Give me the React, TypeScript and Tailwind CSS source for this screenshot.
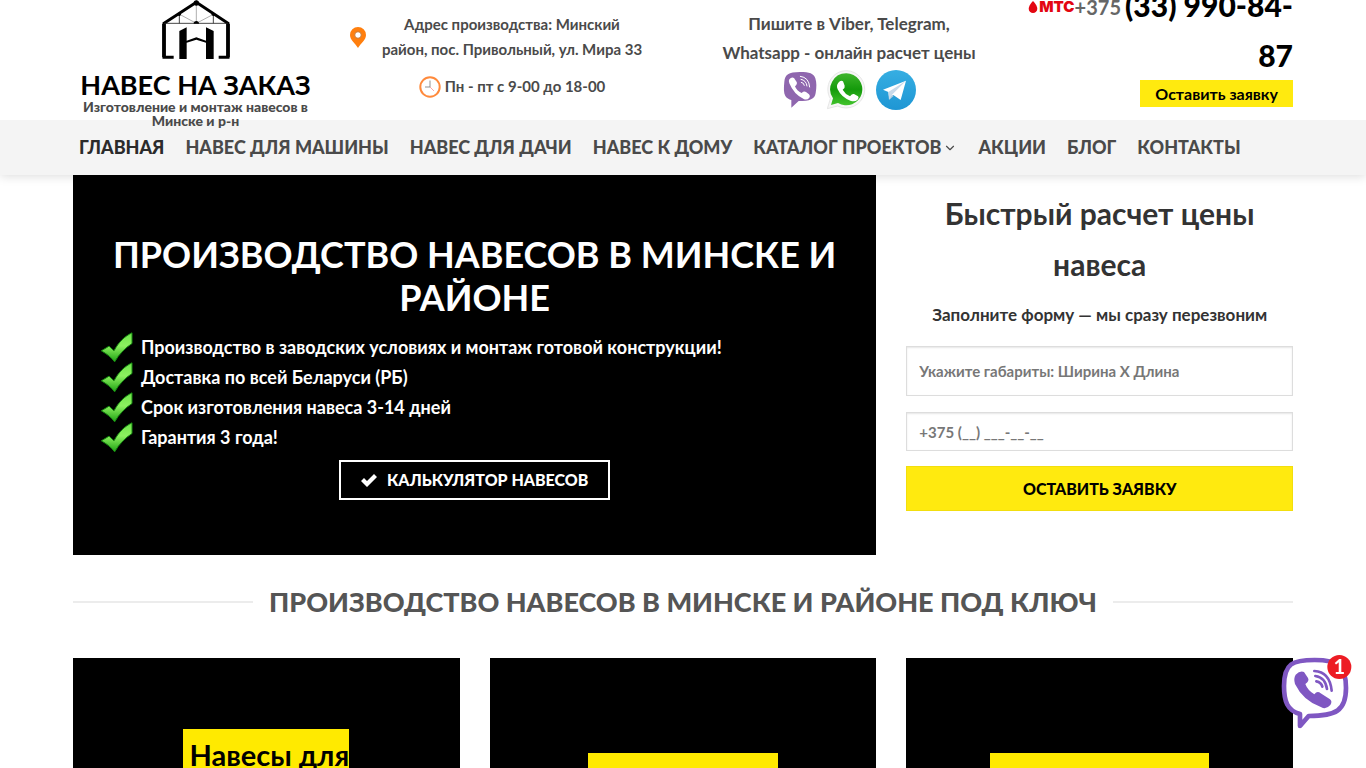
import { FC } from "react";
import { ChevronDown } from "lucide-react";

const navLinks = [
	{ label: "ГЛАВНАЯ", active: true },
	{ label: "НАВЕС ДЛЯ МАШИНЫ" },
	{ label: "НАВЕС ДЛЯ ДАЧИ" },
	{ label: "НАВЕС К ДОМУ" },
	{ label: "КАТАЛОГ ПРОЕКТОВ", menu: true },
	{ label: "АКЦИИ" },
	{ label: "БЛОГ" },
	{ label: "КОНТАКТЫ" },
];

const benefits = [
	"Производство в заводских условиях и монтаж готовой конструкции!",
	"Доставка по всей Беларуси (РБ)",
	"Срок изготовления навеса 3-14 дней",
	"Гарантия 3 года!",
];

const LogoIcon: FC = () => (
	<svg viewBox="276 0 204 180" className="h-[60px] w-[68px] shrink-0" aria-hidden="true">
		<path d="M311 172H282V70L379 7l95 63v102h-28" fill="none" stroke="#000" strokeWidth="9" />
		<path d="M282 72v100M474 72v100" stroke="#000" strokeWidth="11" />
		<path d="M282 70h192M328 42v28M430 42v28" stroke="#222" strokeWidth="2.5" />
		<path d="M379 8v62l-50-27M379 70l51-27" fill="none" stroke="#888" strokeWidth="2" />
		<circle cx="379" cy="9" r="8" />
		<circle cx="328" cy="43" r="5" />
		<circle cx="430" cy="43" r="5" />
		<path d="M371 71a8 8 0 0 1 16 0z" />
		<path d="M328 93l22-11v40l29-10 29 10V82l23 11v84h-23v-49l-29-9-29 9v49h-22z" />
	</svg>
);

const PinIcon: FC = () => (
	<svg viewBox="0 0 16 21" className="h-[21px] w-4 shrink-0" aria-hidden="true">
		<path d="M8 0a8 8 0 0 0-8 8c0 5 5 8 8 13 3-5 8-8 8-13a8 8 0 0 0-8-8z" fill="#ff7f0e" />
		<circle cx="8" cy="8" r="3.3" fill="#fff" stroke="#c9752c" />
	</svg>
);

const ClockIcon: FC = () => (
	<svg viewBox="0 0 22 22" className="h-[22px] w-[22px]" aria-hidden="true">
		<circle cx="11" cy="11" r="9.7" fill="#fff" stroke="#ff8a3c" strokeWidth="2" />
		<path d="M11 4.5V11H6" fill="none" stroke="#777" strokeWidth=".8" />
		<path d="M11 11l4 4" stroke="#f66" strokeWidth=".6" />
	</svg>
);

const ViberIcon: FC = () => (
	<svg viewBox="246 216 102 114" className="h-[38px] w-[34px]" aria-hidden="true">
		<path
			d="M297 219c-35 0-45 8-47 29-2 20-2 34 3 43 4 7 11 10 18 12v23l22-20c34 0 48-5 51-24 3-17 3-32-1-44-5-15-17-19-46-19z"
			fill="#8f66ae"
		/>
		<path
			d="M265 241q7-9 14-4l8 12q3 6-5 13 5 14 20 20 7-7 13-3l9 7q5 5 1 10-7 9-17 4-29-13-43-47-3-7 0-12z"
			fill="#fff"
		/>
		<path
			d="M298 232q26 3 28 32M300 241q16 3 18 20M301 250q8 1 9 9"
			fill="none"
			stroke="#fff"
			strokeWidth="3"
			strokeLinecap="round"
		/>
	</svg>
);

const WhatsappIcon: FC = () => (
	<svg viewBox="381 210 117 120" className="h-10 w-[39px]" aria-hidden="true">
		<defs>
			<linearGradient id="wa" x1="0" y1="0" x2="0" y2="1">
				<stop offset="0" stopColor="#3fb52c" />
				<stop offset=".5" stopColor="#149a0b" />
				<stop offset="1" stopColor="#42c42c" />
			</linearGradient>
		</defs>
		<path
			d="M439 212a56 56 0 1 1-26 106l-31 8 9-30a56 56 0 0 1 48-84z"
			fill="#f7f7f7"
			stroke="#dcdcdc"
			strokeWidth="2"
		/>
		<path d="M439 220a48 48 0 1 1-25 89l-21 6 6-20a48 48 0 0 1 40-75z" fill="url(#wa)" />
		<path
			d="M415 248q7-9 14-4l5 13q2 6-6 12 7 13 22 20 7-9 12-7l12 7q4 4-2 11-8 7-21 2-27-10-38-34-5-12 2-20z"
			fill="#fff"
		/>
	</svg>
);

const TelegramIcon: FC = () => (
	<svg viewBox="522 210 120 120" className="h-10 w-10" aria-hidden="true">
		<defs>
			<linearGradient id="tg" x1="0" y1="0" x2="0" y2="1">
				<stop offset="0" stopColor="#36aee2" />
				<stop offset="1" stopColor="#1e96d4" />
			</linearGradient>
		</defs>
		<circle cx="582" cy="270" r="60" fill="url(#tg)" />
		<path d="M543 269l69-27-16 58-22-15-12 13-3-22z" fill="#fff" />
		<path d="M559 276l53-34-42 42-9 16z" fill="#c8daea" />
		<path d="M570 284l-9 16 14-12z" fill="#a9c9dd" />
	</svg>
);

const CheckIcon: FC = () => (
	<svg viewBox="94 36 96 92" className="h-[31px] w-8 shrink-0" aria-hidden="true">
		<defs>
			<linearGradient id="check" x1="0" y1="0" x2="0" y2="1">
				<stop offset="0" stopColor="#6fe34a" />
				<stop offset=".45" stopColor="#8df060" />
				<stop offset="1" stopColor="#1ea313" />
			</linearGradient>
		</defs>
		<path
			d="M95 92l23-14 15 14c14-26 31-43 54-54v32c-20 13-39 32-52 55-11-14-24-24-40-33z"
			fill="url(#check)"
			stroke="#168a10"
			strokeWidth="3"
		/>
	</svg>
);

const ViberWidget: FC = () => (
	<a href="#viber" aria-label="Написать в Viber" className="fixed right-[14px] bottom-[38px] z-20">
		<svg viewBox="30 42 216 228" className="h-[76px] w-[72px]" aria-hidden="true">
			<path
				d="M134 60c-66 0-92 10-92 78 0 46 10 74 48 84v36l26-30c82 0 112-16 112-84 0-70-26-84-94-84z"
				fill="#fff"
				stroke="#7f57c2"
				strokeWidth="14"
				strokeLinejoin="round"
			/>
			<path
				d="M77 104q13-13 25-8l12 18q5 9-8 18 7 19 27 31 9-12 19-3l28 18q8 7 1 17-13 15-27 7-55-20-79-70-5-17 2-28z"
				fill="#7f57c2"
			/>
			<path
				d="M133 93q46 2 52 59M136 108q30 4 35 39M139 124q15 3 18 16"
				fill="none"
				stroke="#7f57c2"
				strokeWidth="8"
				strokeLinecap="round"
			/>
			<circle cx="208" cy="81" r="36" fill="#ed1c24" />
			<text x="208" y="102" textAnchor="middle" fill="#fff" fontSize="60" fontWeight="700">
				1
			</text>
		</svg>
	</a>
);

const Header: FC = () => (
	<header className="relative z-10">
		{/* sits above the nav so its shadow and the long logo caption layer correctly */}
		<div className="relative z-10 bg-white">
			<div className="mx-auto flex h-[120px] max-w-[1220px]">
				<a href="#home" className="flex w-[245px] flex-col items-center text-center">
					<LogoIcon />
					<span className="mt-[10px] text-[27px] leading-[30px] font-bold whitespace-nowrap text-black">
						НАВЕС НА ЗАКАЗ
					</span>
					<span className="text-[14px] leading-[14px] font-black text-[#4a4a4a]">
						Изготовление и монтаж навесов в Минске и р-н
					</span>
				</a>

				<div className="ml-8 w-[300px] pt-3 text-center text-[15px] font-bold text-[#4a4a4a]">
					<div className="flex items-center gap-2">
						<PinIcon />
						<p className="flex-1 leading-[25px]">
							Адрес производства: Минский
							<br />
							район, пос. Привольный, ул. Мира 33
						</p>
					</div>
					<p className="mt-3 flex items-center justify-center gap-1 pl-6 leading-[25px]">
						<ClockIcon />
						Пн - пт с 9-00 до 18-00
					</p>
				</div>

				<div className="ml-[54px] w-[290px] pt-[9px] text-center text-[17px] leading-[29px] font-bold text-[#4a4a4a]">
					<p>
						Пишите в Viber, Telegram,
						<br />
						Whatsapp - онлайн расчет цены
					</p>
					<div className="mt-[3px] flex items-center justify-center gap-[10px]">
						<a href="#viber" aria-label="Viber">
							<ViberIcon />
						</a>
						<a href="#whatsapp" aria-label="Whatsapp">
							<WhatsappIcon />
						</a>
						<a href="#telegram" aria-label="Telegram">
							<TelegramIcon />
						</a>
					</div>
				</div>

				<div className="ml-auto flex flex-col items-end justify-end pb-[13px] text-right">
					<a href="tel:+375339908487" className="text-[30px] font-black whitespace-nowrap text-black">
						<span className="flex h-[50px] items-center justify-end">
							<svg viewBox="0 0 10 14" className="mt-1 mr-px h-3 w-[10px]" aria-hidden="true">
								<path d="M5 0c2 2 5 6 5 9a5 5 0 0 1-10 0c0-3 3-7 5-9z" fill="#e30611" />
							</svg>
							<span className="mt-1 font-['Inter'] text-[15px] leading-5 text-[#e30611]">МТС</span>
							<span className="mt-1 mr-1 text-[20px] leading-6 font-bold text-[#666]">+375</span>
							<span className="leading-9">(33) 990-84-</span>
						</span>
						<span className="block leading-[50px]">87</span>
					</a>
					<button
						type="button"
						className="h-[27px] shrink-0 bg-[#ffea0f] px-[15px] text-[16px] font-bold text-black"
					>
						Оставить заявку
					</button>
				</div>
			</div>
		</div>

		<div className="bg-[#f4f4f4] shadow-[0_1px_10px_rgba(0,0,0,0.15)]">
			<nav className="mx-auto flex h-[55px] max-w-[1220px] items-center gap-[21px] px-[6px] text-[18px] font-black">
				{navLinks.map((link) => (
					<a
						key={link.label}
						href="#nav"
						className={`flex items-center gap-[2px] whitespace-nowrap ${
							link.active ? "text-[#2b2b2b]" : "text-[#4a4a4a]"
						}`}
					>
						{link.label}
						{link.menu ? <ChevronDown size={14} strokeWidth={2} /> : null}
					</a>
				))}
			</nav>
		</div>
	</header>
);

const Hero: FC = () => (
	<section className="col-span-2 flex min-h-[380px] flex-col bg-black px-7 pt-[58px] text-white">
		<h1 className="text-center text-[36px] leading-[43px] font-bold">
			ПРОИЗВОДСТВО НАВЕСОВ В МИНСКЕ И РАЙОНЕ
		</h1>
		<ul className="mt-[13px] text-[18px] leading-[30px] font-bold">
			{benefits.map((item) => (
				<li key={item} className="flex h-[30px] items-center gap-2">
					<CheckIcon />
					{item}
				</li>
			))}
		</ul>
		<button
			type="button"
			className="mt-2 flex h-10 items-center gap-[10px] self-center border-2 border-white px-5 text-[16px] font-black"
		>
			<svg viewBox="0 0 16 13" className="h-[13px] w-4" aria-hidden="true">
				<path d="M0 7l3-3 3 3 7-7 3 3-10 10z" fill="#fff" />
			</svg>
			КАЛЬКУЛЯТОР НАВЕСОВ
		</button>
	</section>
);

const QuoteForm: FC = () => (
	<form className="flex flex-col pt-[13px]" onSubmit={(e) => e.preventDefault()}>
		<h2 className="text-center text-[30px] leading-[51px] font-bold text-[#333]">
			Быстрый расчет цены
			<br />
			навеса
		</h2>
		<p className="mt-3 mb-[18px] text-center text-[17px] leading-[26px] font-bold text-[#333]">
			Заполните форму — мы сразу перезвоним
		</p>
		<input
			type="text"
			aria-label="Габариты"
			placeholder="Укажите габариты: Ширина Х Длина"
			className="h-[50px] border border-[#ddd] px-3 text-[15px] font-bold shadow-[inset_0_1px_2px_rgba(0,0,0,0.1)] placeholder:text-[#777]"
		/>
		<input
			type="tel"
			aria-label="Телефон"
			placeholder="+375 (__) ___-__-__"
			className="mt-4 h-[39px] border border-[#ddd] px-3 text-[15px] font-bold shadow-[inset_0_1px_2px_rgba(0,0,0,0.1)] placeholder:text-[#777]"
		/>
		<button
			type="submit"
			className="mt-[15px] h-[45px] border border-[#f2de0e] bg-[#ffea0f] text-[16px] font-black text-black"
		>
			ОСТАВИТЬ ЗАЯВКУ
		</button>
	</form>
);

const App: FC = () => {
	return (
		<div className="h-screen overflow-hidden bg-white font-['Lato','Open_Sans',sans-serif]">
			<Header />
			<main className="mx-auto max-w-[1220px]">
				<div className="grid grid-cols-3 gap-x-[30px]">
					<Hero />
					<QuoteForm />
				</div>

				<h2 className="mt-7 flex items-center gap-4 text-[27px] leading-[38px] font-black whitespace-nowrap text-[#555]">
					<span className="h-[2px] flex-1 bg-[#ececec]" />
					ПРОИЗВОДСТВО НАВЕСОВ В МИНСКЕ И РАЙОНЕ ПОД КЛЮЧ
					<span className="h-[2px] flex-1 bg-[#ececec]" />
				</h2>

				<div className="mt-[37px] grid grid-cols-3 gap-x-[30px]">
					<a href="#cars" className="flex h-[260px] justify-center bg-black pt-[71px]">
						<span className="self-start bg-[#ffea00] pl-[6px] text-[29px] leading-[52px] font-bold text-black">
							Навесы для
						</span>
					</a>
					<a href="#dacha" aria-label="Навес для дачи" className="flex h-[260px] justify-center bg-black pt-[95px]">
						<span className="h-12 w-[190px] bg-[#ffea00]" />
					</a>
					<a href="#house" aria-label="Навес к дому" className="flex h-[260px] justify-center bg-black pt-[95px]">
						<span className="h-12 w-[219px] bg-[#ffea00]" />
					</a>
				</div>
			</main>
			<ViberWidget />
		</div>
	);
};

export default App;
